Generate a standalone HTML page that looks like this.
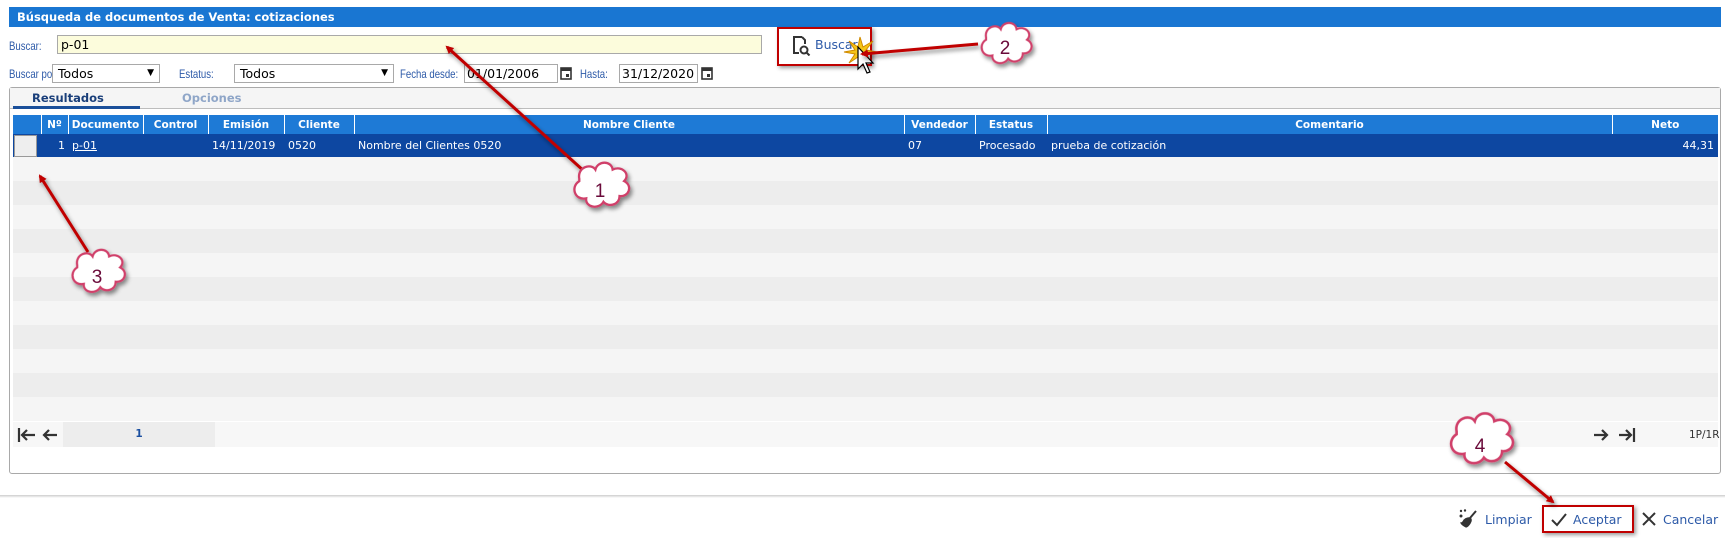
<!DOCTYPE html>
<html><head><meta charset="utf-8"><style>
*{margin:0;padding:0;box-sizing:border-box}
body{width:1725px;height:538px;background:#fff;position:relative;overflow:hidden;font-family:"DejaVu Sans","Liberation Sans",sans-serif;font-size:11px;color:#000}
.abs{position:absolute}
.title{left:9px;top:7px;width:1712px;height:20px;background:#1976d2;color:#fff;font-weight:bold;font-size:11.5px;line-height:20px;padding-left:8px}
.lbl{color:#2d5aa8;font-size:12px;font-family:"Liberation Sans",sans-serif;transform:scaleX(.8);transform-origin:0 0;white-space:nowrap}
.inp{border:1px solid #a9a9a9;background:#fff;font-size:12.5px;line-height:17px;padding-left:3px}
.sel{border:1px solid #a9a9a9;background:#fff;font-size:12.5px;line-height:17px;padding-left:5px}
.sel span{position:absolute;right:5px;top:0;font-size:9px}
.panel{left:9px;top:87px;width:1712px;height:387px;border:1px solid #a9a9a9;border-radius:3px;background:#fff}
.tabbar{left:10px;top:88px;width:1710px;height:21px;background:#f5f5f5;border-bottom:1px solid #bdbdbd}
table{border-collapse:collapse;position:absolute;left:13px;top:115px;width:1705px;table-layout:fixed}
th{background:#1e7ad6;color:#fff;font-weight:bold;font-size:10.5px;height:19px;border-left:1px solid #fff;text-align:center;padding:0;white-space:nowrap;overflow:hidden}
th:first-child{border-left:none}
td{height:24px;padding:0 4px;white-space:nowrap;font-size:11px}
tr.s td{background:#0d47a1;color:#fff;height:23px}
tr.a td{background:#f5f5f5}
tr.b td{background:#ededed}
.btn{color:#2d5aa8;font-size:12.5px}
</style></head><body>
<div class="abs title">Búsqueda de documentos de Venta: cotizaciones</div>
<div class="abs lbl" style="left:9px;top:39px">Buscar:</div>
<div class="abs inp" style="left:57px;top:35px;width:705px;height:19px;background:#fcfcdc">p-01</div>
<div class="abs" style="left:777px;top:27px;width:95px;height:39px;border:2px solid #c00000;box-shadow:2px 2px 4px rgba(0,0,0,.4)"></div>
<svg class="abs" style="left:791px;top:36px" width="20" height="20" viewBox="0 0 20 20"><path d="M11 1H3v16h5" fill="none" stroke="#333" stroke-width="2"/><path d="M11 1l3 3v4" fill="none" stroke="#333" stroke-width="2"/><circle cx="13" cy="14" r="3.5" fill="none" stroke="#333" stroke-width="2"/><path d="M15.5 16.5l3 3" stroke="#333" stroke-width="2"/></svg>
<div class="abs btn" style="left:815px;top:37px">Buscar</div>
<svg class="abs" style="left:843px;top:35px" width="40" height="45" viewBox="0 0 40 45"><polygon points="17,2 20,12 30,6 23,15 34,17 23,19 29,28 20,22 17,32 15,22 6,28 12,19 1,17 12,15 6,6 15,12" fill="#f5c518" stroke="#d08a00" stroke-width="1"/><path d="M15 12v22l5-5 4 9 3-1-4-9h7z" fill="#fff" stroke="#000" stroke-width="1.2"/></svg>
<div class="abs lbl" style="left:9px;top:67px">Buscar por:</div>
<div class="abs sel" style="left:52px;top:64px;width:108px;height:19px">Todos<span>▼</span></div>
<div class="abs lbl" style="left:179px;top:67px">Estatus:</div>
<div class="abs sel" style="left:234px;top:64px;width:160px;height:19px">Todos<span>▼</span></div>
<div class="abs lbl" style="left:400px;top:67px">Fecha desde:</div>
<div class="abs inp" style="left:464px;top:64px;width:94px;height:19px;padding-left:2px">01/01/2006</div>
<svg class="abs" style="left:560px;top:66px" width="12" height="14"><rect x="1" y="2" width="10" height="11" fill="none" stroke="#333" stroke-width="1.6"/><rect x="1" y="2" width="10" height="3" fill="#333"/><rect x="6" y="8" width="3" height="3" fill="#333"/></svg>
<div class="abs lbl" style="left:580px;top:67px">Hasta:</div>
<div class="abs inp" style="left:619px;top:64px;width:79px;height:19px;padding-left:2px">31/12/2020</div>
<svg class="abs" style="left:701px;top:66px" width="12" height="14"><rect x="1" y="2" width="10" height="11" fill="none" stroke="#333" stroke-width="1.6"/><rect x="1" y="2" width="10" height="3" fill="#333"/><rect x="6" y="8" width="3" height="3" fill="#333"/></svg>

<div class="abs panel"></div>
<div class="abs tabbar"></div>
<div class="abs" style="left:32px;top:91px;color:#1a3f7a;font-weight:bold;font-size:11.5px">Resultados</div>
<div class="abs" style="left:13px;top:106px;width:127px;height:3px;background:#1a4f9a"></div>
<div class="abs" style="left:182px;top:91px;color:#8fa6c8;font-weight:bold;font-size:11.5px">Opciones</div>

<table>
<colgroup><col style="width:28px"><col style="width:27px"><col style="width:75px"><col style="width:65px"><col style="width:76px"><col style="width:70px"><col style="width:550px"><col style="width:71px"><col style="width:72px"><col style="width:565px"><col></colgroup>
<tr><th></th><th>Nº</th><th>Documento</th><th>Control</th><th>Emisión</th><th>Cliente</th><th>Nombre Cliente</th><th>Vendedor</th><th>Estatus</th><th>Comentario</th><th>Neto</th></tr>
<tr class="s"><td style="padding:0 1px"><div style="width:23px;height:22px;background:#eee;border:1px solid #999"></div></td><td style="text-align:right;padding-right:3px">1</td><td><u>p-01</u></td><td></td><td>14/11/2019</td><td>0520</td><td>Nombre del Clientes 0520</td><td>07</td><td>Procesado</td><td>prueba de cotización</td><td style="text-align:right">44,31</td></tr>
<tr class="a"><td colspan="11"></td></tr><tr class="b"><td colspan="11"></td></tr>
<tr class="a"><td colspan="11"></td></tr><tr class="b"><td colspan="11"></td></tr>
<tr class="a"><td colspan="11"></td></tr><tr class="b"><td colspan="11"></td></tr>
<tr class="a"><td colspan="11"></td></tr><tr class="b"><td colspan="11"></td></tr>
<tr class="a"><td colspan="11"></td></tr><tr class="b"><td colspan="11"></td></tr>
<tr class="a"><td colspan="11"></td></tr>
</table>
<div class="abs" style="left:13px;top:422px;width:1705px;height:25px;background:#f7f7f7"></div>
<div class="abs" style="left:63px;top:422px;width:152px;height:25px;background:#ededed;color:#1a4fa0;font-weight:bold;font-size:10.5px;text-align:center;line-height:25px">1</div>
<svg class="abs" style="left:16px;top:426px" width="44" height="18" viewBox="0 0 44 18"><g fill="none" stroke="#333" stroke-width="2.2"><path d="M3 2v14M19 9H6M11 4L6 9l5 5M41 9H28M33 4l-5 5 5 5"/></g></svg>
<svg class="abs" style="left:1592px;top:426px" width="46" height="18" viewBox="0 0 46 18"><g fill="none" stroke="#333" stroke-width="2.2"><path d="M2 9h13M10 4l5 5-5 5M27 9h12M34 4l5 5-5 5M42 2v14"/></g></svg>
<div class="abs" style="left:1689px;top:429px;font-size:10.5px;color:#333">1P/1R</div>

<div class="abs" style="left:0;top:495px;width:1725px;height:3px;background:linear-gradient(#ccc,#fff)"></div>
<svg class="abs" style="left:1459px;top:509px" width="20" height="20" viewBox="0 0 20 20"><g fill="#333"><circle cx="2" cy="2" r="1.2"/><circle cx="6" cy="1.5" r="1.2"/><circle cx="2" cy="7" r="1.5"/></g><path d="M17 2l-6 7" stroke="#333" stroke-width="2"/><path d="M5 11c2-2 6-3 7-1 1 2-2 7-5 8-2-1-4-2-5-4 1 0 2-1 3-3z" fill="#333" stroke="#333" stroke-width="1.2"/></svg>
<div class="abs btn" style="left:1485px;top:512px">Limpiar</div>
<div class="abs" style="left:1542px;top:505px;width:92px;height:28px;border:2px solid #c00000;box-shadow:2px 2px 4px rgba(0,0,0,.4)"></div>
<svg class="abs" style="left:1550px;top:511px" width="18" height="16"><path d="M2 9l5 5L16 3" fill="none" stroke="#333" stroke-width="2"/></svg>
<div class="abs btn" style="left:1573px;top:512px">Aceptar</div>
<svg class="abs" style="left:1641px;top:511px" width="16" height="16"><path d="M2 2l12 12M14 2L2 14" stroke="#333" stroke-width="2"/></svg>
<div class="abs btn" style="left:1663px;top:512px">Cancelar</div>

<svg class="abs" style="left:0;top:0" width="1725" height="538">
<defs>
<marker id="ah" markerWidth="8" markerHeight="8" refX="6" refY="4" orient="auto" markerUnits="userSpaceOnUse"><path d="M0 0L8 4L0 8z" fill="#c00000"/></marker>
<filter id="sh"><feDropShadow dx="2" dy="3" stdDeviation="2" flood-opacity=".45"/></filter>
<g id="cl"><path d="M-18 -8c-2-10 10-14 14-8 2-8 14-8 15 0 8-4 16 4 10 10 8 4 4 14-4 13 0 8-10 10-14 5-4 7-16 5-15-3-10 2-14-10-6-15z" fill="#fff" stroke="#d0406a" stroke-width="2"/></g>
</defs>
<g stroke="#c00000" stroke-width="3" filter="url(#sh)">
<line x1="585" y1="172" x2="447" y2="47" marker-end="url(#ah)"/>
<line x1="978" y1="44" x2="862" y2="54" marker-end="url(#ah)"/>
<line x1="88" y1="252" x2="40" y2="176" marker-end="url(#ah)"/>
<line x1="1505" y1="462" x2="1553" y2="502" marker-end="url(#ah)"/>
</g>
<g filter="url(#sh)">
<use href="#cl" transform="translate(600,188) scale(1.15)"/>
<use href="#cl" transform="translate(1005,46) scale(1.05)"/>
<use href="#cl" transform="translate(97,274) scale(1.1)"/>
<use href="#cl" transform="translate(1480,442) scale(1.3)"/>
</g>
<g font-family="Liberation Sans,sans-serif" font-size="19" fill="#6a0a3a" text-anchor="middle">
<text x="600" y="197">1</text><text x="1005" y="54">2</text><text x="97" y="283">3</text><text x="1480" y="452">4</text>
</g>
</svg>
</body></html>
